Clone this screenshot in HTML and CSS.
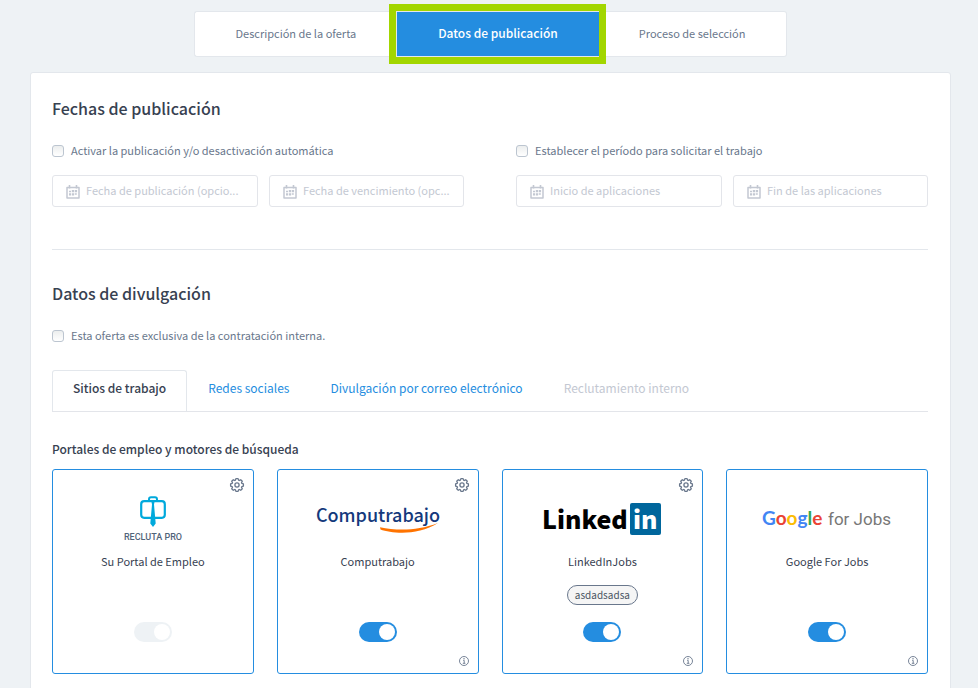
FILE: index.html
```html
<!DOCTYPE html>
<html lang="es">
<head>
  <meta charset="UTF-8">
  <meta name="viewport" content="width=device-width, initial-scale=1">
  <title>Datos de publicación</title>
  <link rel="stylesheet" href="styles.css">
</head>
<body>
  <!-- Iconos compartidos -->
  <svg class="sprite" aria-hidden="true">
    <symbol id="icon-calendar" viewBox="0 0 14 14">
      <path d="M1 2.500h12v10.500H1z" fill="none" stroke="currentColor" stroke-width="1.500" stroke-linejoin="round"/>
      <path d="M3.500 0v3.500M10.500 0v3.500" stroke="currentColor" stroke-width="1.600"/>
      <path d="M5.800 5h2.300v2.300H5.800zM8.800 5h2.300v2.300H8.800zM3 5.800h2v1.500H3zM3 8.200h2v2.300H3zM5.800 8.200h2.300v2.300H5.800zM8.800 8.200h2v1.500h-2z" fill="currentColor"/>
    </symbol>
    <symbol id="icon-gear" viewBox="0 0 16 16">
      <path d="M14.400 9.100 12.900 9.600 12.500 10.300 13.300 11.700 11.700 13.300 10.300 12.500 9.600 12.900 9.100 14.400H6.900L6.400 12.900 5.700 12.500 4.300 13.300 2.700 11.700 3.500 10.300 3.100 9.600 1.600 9.100V6.900L3.100 6.400 3.500 5.700 2.700 4.300 4.300 2.700 5.700 3.500 6.400 3.100 6.900 1.600H9.100L9.600 3.100 10.300 3.500 11.700 2.700 13.300 4.300 12.500 5.700 12.900 6.400 14.400 6.900Z" fill="none" stroke="currentColor" stroke-width="1.300" stroke-linejoin="round"/>
      <circle cx="8" cy="8" r="2.100" fill="none" stroke="currentColor" stroke-width="1.300"/>
    </symbol>
    <symbol id="icon-info" viewBox="0 0 10 10">
      <circle cx="5" cy="5" r="4.500" fill="none" stroke="currentColor" stroke-width=".9"/>
      <path d="M4.200 4.400h1v2.900M3.800 7.300h2.600" fill="none" stroke="currentColor" stroke-width=".9"/>
      <circle cx="5" cy="2.800" r=".7" fill="currentColor"/>
    </symbol>
  </svg>

  <nav class="steps" aria-label="Pasos de la oferta">
    <a href="#descripcion" class="step">Descripción de la oferta</a>
    <a href="#publicacion" class="step active" aria-current="step">Datos de publicación</a>
    <a href="#seleccion" class="step">Proceso de selección</a>
  </nav>

  <main class="panel">
    <!-- Fechas -->
    <section class="section">
      <h2>Fechas de publicación</h2>
      <div class="date-columns">
        <div>
          <label class="check"><input type="checkbox"> Activar la publicación y/o desactivación automática</label>
          <div class="date-row">
            <div class="date-field">
              <svg><use href="#icon-calendar"/></svg>
              <input type="text" aria-label="Fecha de publicación" placeholder="Fecha de publicación (opcio...">
            </div>
            <div class="date-field">
              <svg><use href="#icon-calendar"/></svg>
              <input type="text" aria-label="Fecha de vencimiento" placeholder="Fecha de vencimiento (opc...">
            </div>
          </div>
        </div>
        <div>
          <label class="check"><input type="checkbox"> Establecer el período para solicitar el trabajo</label>
          <div class="date-row">
            <div class="date-field">
              <svg><use href="#icon-calendar"/></svg>
              <input type="text" aria-label="Inicio de aplicaciones" placeholder="Inicio de aplicaciones">
            </div>
            <div class="date-field">
              <svg><use href="#icon-calendar"/></svg>
              <input type="text" aria-label="Fin de las aplicaciones" placeholder="Fin de las aplicaciones">
            </div>
          </div>
        </div>
      </div>
    </section>

    <!-- Divulgación -->
    <section class="section">
      <h2>Datos de divulgación</h2>
      <label class="check"><input type="checkbox"> Esta oferta es exclusiva de la contratación interna.</label>

      <div class="tabs" role="tablist">
        <button type="button" class="tab active" role="tab" aria-selected="true">Sitios de trabajo</button>
        <button type="button" class="tab" role="tab">Redes sociales</button>
        <button type="button" class="tab" role="tab">Divulgación por correo electrónico</button>
        <button type="button" class="tab" role="tab" disabled>Reclutamiento interno</button>
      </div>

      <h3>Portales de empleo y motores de búsqueda</h3>
      <div class="cards">
        <article class="card">
          <div class="card-top">
            <button type="button" class="icon-button" aria-label="Configurar Su Portal de Empleo"><svg><use href="#icon-gear"/></svg></button>
          </div>
          <svg class="logo" viewBox="0 0 140 52" role="img" aria-label="Recluta Pro">
            <rect x="58.200" y="8.200" width="23.600" height="16.600" rx="3" fill="none" stroke="#00a9dc" stroke-width="2.200"/>
            <path d="M66 8V6.500Q66 4.200 68 4.200H72Q74 4.200 74 6.500V8" fill="none" stroke="#00a9dc" stroke-width="2"/>
            <path d="M68.300 8H71.700L71 11.500 72.700 30.500 70 34 67.300 30.500 69 11.500Z" fill="#00a9dc"/>
            <text class="logo-recluta" x="70" y="47" text-anchor="middle">RECLUTA PRO</text>
          </svg>
          <h4 id="portal">Su Portal de Empleo</h4>
          <div class="tag-slot"></div>
          <input type="checkbox" class="toggle" aria-labelledby="portal" checked disabled>
          <div class="card-bottom"></div>
        </article>

        <article class="card">
          <div class="card-top">
            <button type="button" class="icon-button" aria-label="Configurar Computrabajo"><svg><use href="#icon-gear"/></svg></button>
          </div>
          <svg class="logo" viewBox="0 0 140 52" role="img" aria-label="Computrabajo">
            <text class="logo-compu" x="70" y="29" text-anchor="middle">Computrabajo</text>
            <path d="M72 34.200C88 37.500 108 38.500 130 30C110 43 84 40.500 72.500 36.500Z" fill="#ff7300"/>
          </svg>
          <h4 id="computrabajo">Computrabajo</h4>
          <div class="tag-slot"></div>
          <input type="checkbox" class="toggle" aria-labelledby="computrabajo" checked>
          <div class="card-bottom">
            <button type="button" class="icon-button info" aria-label="Información"><svg><use href="#icon-info"/></svg></button>
          </div>
        </article>

        <article class="card">
          <div class="card-top">
            <button type="button" class="icon-button" aria-label="Configurar LinkedInJobs"><svg><use href="#icon-gear"/></svg></button>
          </div>
          <svg class="logo" viewBox="0 0 140 52" role="img" aria-label="LinkedIn">
            <text class="logo-linked" x="10" y="36">Linked</text>
            <rect x="98" y="10" width="31" height="32" rx="2" fill="#00669c"/>
            <text class="logo-linked logo-in" x="101" y="36">in</text>
          </svg>
          <h4 id="linkedin">LinkedInJobs</h4>
          <div class="tag-slot"><span class="tag">asdadsadsa</span></div>
          <input type="checkbox" class="toggle" aria-labelledby="linkedin" checked>
          <div class="card-bottom">
            <button type="button" class="icon-button info" aria-label="Información"><svg><use href="#icon-info"/></svg></button>
          </div>
        </article>

        <article class="card">
          <div class="card-top"></div>
          <svg class="logo" viewBox="0 0 140 52" role="img" aria-label="Google for Jobs">
            <text class="logo-google" x="5" y="32"><tspan fill="#4285f4">G</tspan><tspan fill="#ea4335">o</tspan><tspan fill="#fbbc05">o</tspan><tspan fill="#4285f4">g</tspan><tspan fill="#34a853">l</tspan><tspan fill="#ea4335">e</tspan></text>
            <text class="logo-jobs" x="71" y="32">for Jobs</text>
          </svg>
          <h4 id="google">Google For Jobs</h4>
          <div class="tag-slot"></div>
          <input type="checkbox" class="toggle" aria-labelledby="google" checked>
          <div class="card-bottom">
            <button type="button" class="icon-button info" aria-label="Información"><svg><use href="#icon-info"/></svg></button>
          </div>
        </article>
      </div>
    </section>
  </main>
</body>
</html>
```
FILE: styles.css
```css
* {
  box-sizing: border-box;
}

body {
  margin: 0;
  padding: 11px 27px 24px 30px;
  background: #eef2f5;
  color: #69778c;
  font-family: "Noto Sans CJK KR", "Open Sans", sans-serif;
  font-size: 11px;
  line-height: 16px;
}

h2, h3, h4 {
  margin: 0;
  color: #374151;
}

h2 {
  font-size: 16px;
  font-weight: 500;
  line-height: 24px;
}

h3 {
  margin: 29px 0 12px;
  font-size: 12px;
  font-weight: 500;
}

h4 {
  margin-top: 8px;
  font-size: 11px;
  font-weight: 400;
}

button, input {
  margin: 0;
  font-family: inherit;
}

.sprite {
  display: none;
}

/* Pasos */
.steps {
  display: flex;
  width: fit-content;
  height: 46px;
  margin: 0 auto 15px;
}

.step {
  display: flex;
  align-items: center;
  padding: 0 40px 2px;
  border: 1px solid #e3e7ec;
  border-right: 0;
  border-radius: 3px 0 0 3px;
  background: #fff;
  color: #69778c;
  text-decoration: none;
}

.step:last-child {
  border-right: 1px solid #e3e7ec;
  border-left: 0;
  border-radius: 0 3px 3px 0;
}

.step.active {
  z-index: 1;
  padding: 0 41px 2px;
  border-radius: 0;
  outline: 7px solid #a2d600;
  background: #248de0;
  color: #fff;
  font-size: 12px;
  font-weight: 500;
}

/* Panel */
.panel {
  border: 1px solid #e3e7ec;
  border-radius: 3px;
  padding: 23px 22px 32px 21px;
  background: #fff;
}

.section + .section {
  margin-top: 42px;
  border-top: 1px solid #e3e7ec;
  padding-top: 31px;
}

.check {
  display: flex;
  align-items: center;
  gap: 7px;
  margin-top: 22px;
}

.check input {
  appearance: none;
  width: 12px;
  height: 12px;
  margin-top: 2px;
  border: 1px solid #bcc5d0;
  border-radius: 3px;
  background: linear-gradient(#eceeee, #fff);
}

/* Fechas */
.date-columns {
  display: grid;
  grid-template-columns: 1fr 1fr;
  gap: 52px;
}

.date-row {
  display: flex;
  gap: 11px;
  margin-top: 17px;
}

.date-field {
  display: flex;
  align-items: center;
  flex: 1;
  gap: 6px;
  min-width: 0;
  height: 32px;
  padding: 0 8px 0 13px;
  border: 1px solid #e3e5ea;
  border-radius: 3px;
  color: #c3c8d2;
}

.date-field:first-child {
  flex: 0 0 50%;
}

.date-field svg {
  flex: none;
  width: 14px;
  height: 14px;
  margin-top: 2px;
}

.date-field input {
  flex: 1;
  min-width: 0;
  height: 20px;
  padding: 0 0 2px;
  border: 0;
  outline: 0;
  background: none;
  font-size: 11px;
  text-overflow: ellipsis;
}

.date-field input::placeholder {
  color: #c3c8d2;
}

/* Pestañas */
.tabs {
  display: flex;
  margin-top: 27px;
  border-bottom: 1px solid #e3e5ea;
}

.tab {
  height: 41px;
  padding: 0 20px 7px;
  border: 1px solid transparent;
  border-right: 0;
  border-bottom: 0;
  background: none;
  color: #248de0;
  font-size: 12px;
  line-height: 16px;
  cursor: pointer;
}

.tab.active {
  border: 1px solid #e3e7ec;
  border-bottom: 0;
  border-radius: 3px 3px 0 0;
  background: #fff;
  color: #374151;
  font-weight: 500;
}

.tab:disabled {
  color: #c3c8d2;
  cursor: default;
}

/* Tarjetas de portales */
.cards {
  display: grid;
  grid-template-columns: repeat(4, 1fr);
  gap: 23px;
}

.card {
  display: flex;
  flex-direction: column;
  align-items: center;
  padding: 7px 8px;
  border: 1px solid #248de0;
  border-radius: 3px;
}

.card-top, .card-bottom {
  display: flex;
  justify-content: flex-end;
  align-self: stretch;
  height: 16px;
}

.card-bottom {
  height: 10px;
  margin-top: 14px;
}

.icon-button {
  width: 16px;
  height: 16px;
  padding: 0;
  border: 0;
  background: none;
  color: #69778c;
  cursor: pointer;
}

.icon-button svg {
  display: block;
  width: 100%;
  height: 100%;
}

.icon-button.info {
  width: 10px;
  height: 10px;
  margin-right: 1px;
}

.logo {
  width: 140px;
  height: 52px;
}

.logo-recluta {
  fill: #51647a;
  font: 500 9px "Roboto", sans-serif;
}

.logo-compu {
  fill: #14397c;
  font-size: 18px;
  font-weight: 500;
}

.logo-linked {
  fill: #000;
  font-size: 25px;
  font-weight: 900;
}

.logo-in {
  fill: #fff;
}

.logo-google {
  font: 700 19px "Lato", sans-serif;
}

.logo-jobs {
  fill: #777;
  font: 400 17px "Roboto", sans-serif;
}

.tag-slot {
  height: 20px;
  margin: 16px 0 17px;
}

.tag {
  display: block;
  padding: 0 7px;
  border: 1px solid #69778c;
  border-radius: 10px;
  background: #f5f5f5;
  color: #4b5563;
  font-size: 10px;
  line-height: 18px;
}

.toggle {
  appearance: none;
  display: flex;
  justify-content: flex-end;
  width: 38px;
  height: 20px;
  padding: 2px;
  border-radius: 10px;
  background: #248de0;
  cursor: pointer;
}

.toggle::before {
  content: "";
  width: 16px;
  height: 16px;
  border-radius: 50%;
  background: #fff;
}

.toggle:not(:checked) {
  justify-content: flex-start;
}

.toggle:disabled {
  background: #eef2f5;
  cursor: default;
}
```
